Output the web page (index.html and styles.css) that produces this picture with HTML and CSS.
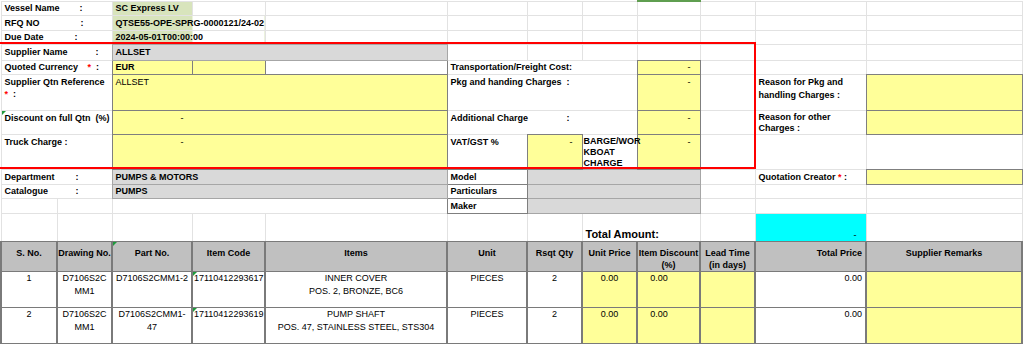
FILE: index.html
```html
<!DOCTYPE html>
<html lang="en">
<head>
    <meta charset="UTF-8">
    <meta name="viewport" content="width=device-width, initial-scale=1.0">
    <title>Supplier Quotation</title>
    <link rel="stylesheet" href="styles.css">
</head>
<body>
<div class="sheet">
    <table class="grid">
        <colgroup>
            <col class="col-a"><col class="col-b"><col class="col-c"><col class="col-d">
            <col class="col-e"><col class="col-f"><col class="col-g"><col class="col-h">
            <col class="col-i"><col class="col-j"><col class="col-k"><col class="col-l">
        </colgroup>

        <!-- vessel header -->
        <tr class="h14">
            <td colspan="2" class="lbl"><span class="key w75">Vessel Name</span>:</td>
            <td class="vessel">SC Express LV</td>
            <td></td><td></td><td></td><td></td><td></td>
            <td class="selected"></td><td></td><td></td><td></td>
        </tr>
        <tr class="h15">
            <td colspan="2" class="lbl"><span class="key w76">RFQ NO</span>:</td>
            <td colspan="2" class="vessel-wide">QTSE55-OPE-SPRG-0000121/24-02</td>
            <td></td><td></td><td></td><td></td><td></td><td></td><td></td><td></td>
        </tr>
        <tr class="h14">
            <td colspan="2" class="lbl"><span class="key w70">Due Date</span>:</td>
            <td colspan="2" class="vessel-wide">2024-05-01T00:00:00</td>
            <td></td><td></td><td></td><td></td><td></td><td></td><td></td><td></td>
        </tr>

        <!-- supplier block -->
        <tr class="h16">
            <td colspan="2" class="lbl"><span class="key w91">Supplier Name</span>:</td>
            <td colspan="3" class="fill">ALLSET</td>
            <td></td><td></td><td></td><td></td><td></td><td></td><td></td>
        </tr>
        <tr class="h14">
            <td colspan="2" class="lbl"><span class="key w83">Quoted Currency</span><span class="req">*</span><span class="sep">:</span></td>
            <td class="input b">EUR</td>
            <td class="input"></td>
            <td class="boxed"></td>
            <td colspan="3" class="lbl">Transportation/Freight Cost:</td>
            <td class="input acc">-</td>
            <td></td><td></td><td></td>
        </tr>
        <tr class="h36 top">
            <td colspan="2" class="lbl">Supplier Qtn Reference<br><span class="req">*</span><span class="sep">:</span></td>
            <td colspan="3" class="input">ALLSET</td>
            <td colspan="3" class="lbl"><span class="key w116">Pkg and handing Charges</span>:</td>
            <td class="input acc">-</td>
            <td></td>
            <td class="lbl reason">Reason for Pkg and<br>handling Charges :</td>
            <td class="input"></td>
        </tr>
        <tr class="h24 top">
            <td colspan="2" class="lbl note"><span class="tri"></span>Discount on full Qtn&nbsp; (%)</td>
            <td colspan="3" class="input dash">-</td>
            <td colspan="3" class="lbl"><span class="key w116">Additional Charge</span>:</td>
            <td class="input acc">-</td>
            <td></td>
            <td class="lbl tight">Reason for other<br>Charges :</td>
            <td class="input"></td>
        </tr>
        <tr class="h35 top">
            <td colspan="2" class="lbl">Truck Charge :</td>
            <td colspan="3" class="input dash">-</td>
            <td class="lbl">VAT/GST %</td>
            <td class="input acc">-</td>
            <td class="lbl wrap">BARGE/WOR<br>KBOAT<br>CHARGE</td>
            <td class="input acc">-</td>
            <td></td><td></td><td></td>
        </tr>

        <!-- department block -->
        <tr class="h15">
            <td colspan="2" class="lbl"><span class="key w71">Department</span>:</td>
            <td colspan="3" class="fill">PUMPS &amp; MOTORS</td>
            <td class="boxed lbl">Model</td>
            <td colspan="3" class="fill"></td>
            <td></td>
            <td class="lbl">Quotation Creator <span class="req">*</span> :</td>
            <td class="input"></td>
        </tr>
        <tr class="h14">
            <td colspan="2" class="lbl"><span class="key w71">Catalogue</span>:</td>
            <td colspan="3" class="fill">PUMPS</td>
            <td class="boxed lbl">Particulars</td>
            <td colspan="3" class="fill"></td>
            <td></td><td></td><td></td>
        </tr>
        <tr class="h15">
            <td></td><td></td><td colspan="3"></td>
            <td class="boxed lbl">Maker</td>
            <td colspan="3" class="fill"></td>
            <td></td><td></td><td></td>
        </tr>
        <tr class="h28">
            <td></td><td></td><td></td><td></td><td></td><td></td><td></td>
            <td colspan="2" class="total">Total Amount:</td>
            <td></td>
            <td class="cyan acc">-</td>
            <td></td>
        </tr>

        <!-- items -->
        <tr class="h30 head">
            <th>S. No.</th>
            <th>Drawing No.</th>
            <th class="note"><span class="tri"></span>Part No.</th>
            <th>Item Code</th>
            <th>Items</th>
            <th>Unit</th>
            <th>Rsqt Qty</th>
            <th>Unit Price</th>
            <th>Item Discount<br>(%)</th>
            <th>Lead Time<br>(in days)</th>
            <th class="num">Total Price</th>
            <th>Supplier Remarks</th>
        </tr>
        <tr class="h36 data">
            <td>1</td>
            <td>D7106S2C<br>MM1</td>
            <td>D7106S2CMM1-2</td>
            <td class="clip"><span class="tri"></span>17110412293617</td>
            <td>INNER COVER<br>POS. 2, BRONZE, BC6</td>
            <td>PIECES</td>
            <td>2</td>
            <td class="yel">0.00</td>
            <td class="yel disc">0.00</td>
            <td class="yel"></td>
            <td class="num">0.00</td>
            <td class="yel"></td>
        </tr>
        <tr class="h36 data">
            <td>2</td>
            <td>D7106S2C<br>MM1</td>
            <td>D7106S2CMM1-<br>47</td>
            <td class="clip"><span class="tri"></span>17110412293619</td>
            <td>PUMP SHAFT<br>POS. 47, STAINLESS STEEL, STS304</td>
            <td>PIECES</td>
            <td>2</td>
            <td class="yel">0.00</td>
            <td class="yel disc">0.00</td>
            <td class="yel"></td>
            <td class="num">0.00</td>
            <td class="yel"></td>
        </tr>
    </table>

    <div class="redbox"></div>
</div>
</body>
</html>
```

FILE: styles.css
```css
* {
    box-sizing: border-box;
    margin: 0;
    padding: 0;
}

body {
    background-color: #fff;
    font-family: "Liberation Sans", Arial, sans-serif;
    font-size: 9px;
    color: #000;
}

.sheet {
    position: relative;
    width: 1024px;
    height: 345px;
    overflow: hidden;
}

/* spreadsheet grid */
.grid {
    border-collapse: collapse;
    table-layout: fixed;
    width: 1021px;
}

.grid col,
.grid tr {
    border: 1px solid #e2e2e2;
}

td,
th {
    padding: 0 2px 0 3px;
    white-space: nowrap;
    line-height: 12px;
    vertical-align: middle;
    text-align: left;
    font-weight: normal;
}

.col-a { width: 56px; }
.col-b { width: 55px; }
.col-c { width: 80px; }
.col-d { width: 73px; }
.col-e { width: 182px; }
.col-f { width: 80px; }
.col-g { width: 55px; }
.col-h { width: 55px; }
.col-i { width: 63px; }
.col-j { width: 55px; }
.col-k { width: 111px; }
.col-l { width: 156px; }

.h14 { height: 14px; }
.h15 { height: 15px; }
.h16 { height: 16px; }
.h24 { height: 24px; }
.h28 { height: 28px; }
.h30 { height: 30px; }
.h35 { height: 35px; }
.h36 { height: 36px; }

.top > td {
    vertical-align: top;
    padding-top: 1px;
}

/* labels */
.lbl,
.b {
    font-weight: bold;
}

.key {
    display: inline-block;
}

.w70 { width: 70px; }
.w71 { width: 71px; }
.w75 { width: 75px; }
.w76 { width: 76px; }
.w83 { width: 83px; }
.w91 { width: 91px; }
.w116 { width: 116px; }

.req {
    color: #ff0000;
    font-weight: bold;
}

.sep {
    margin-left: 5px;
}

.reason {
    line-height: 13px;
}

.tight {
    line-height: 11px;
}

.top .wrap {
    line-height: 11px;
    padding-top: 1px;
    padding-left: 1px;
}

/* cell fills */
.vessel {
    background-color: #d8e4bc;
    font-weight: bold;
}

.vessel-wide {
    background: linear-gradient(to right, #d8e4bc 80px, transparent 80px);
    font-weight: bold;
}

.selected {
    border-top: 2px solid #5f9e50;
}

.fill {
    background-color: #d9d9d9;
    border: 1px solid #a6a6a6;
    font-weight: bold;
}

.input {
    background-color: #ffff99;
    border: 1px solid #7f7f7f;
}

.boxed {
    border: 1px solid #7f7f7f;
}

.acc {
    text-align: right;
    padding-right: 9px;
}

.dash {
    padding-left: 68px;
}

.total {
    font-size: 11px;
    font-weight: bold;
    line-height: 13px;
    vertical-align: bottom;
}

.cyan {
    background-color: #00ffff;
    vertical-align: bottom;
}

/* small green corner marks */
.note {
    position: relative;
}

.tri {
    position: absolute;
    top: 0;
    left: 0;
    width: 0;
    height: 0;
    border-top: 4px solid #1f9a3c;
    border-right: 4px solid transparent;
}

/* item table */
.head th {
    background-color: #c0c0c0;
    border: 1px solid #7a7a7a;
    border-left-width: 2px;
    border-right-width: 2px;
    font-weight: bold;
    text-align: center;
    vertical-align: top;
    padding: 5px 0 0;
    line-height: 12px;
}

.data td {
    border: 1px solid #7a7a7a;
    border-left-width: 2px;
    border-right-width: 2px;
    vertical-align: top;
    text-align: center;
    line-height: 13px;
    padding: 0;
}

.data .yel {
    background-color: #ffff99;
}

.data .disc {
    padding-right: 19px;
}

.head .num,
.data .num {
    text-align: right;
    padding-right: 3px;
}

.data .clip {
    position: relative;
    overflow: hidden;
    text-align: left;
    padding-left: 1px;
}

/* red frame around the supplier block */
.redbox {
    position: absolute;
    left: -2px;
    top: 42px;
    width: 758px;
    height: 127px;
    border: 2px solid #ff0000;
}
```
